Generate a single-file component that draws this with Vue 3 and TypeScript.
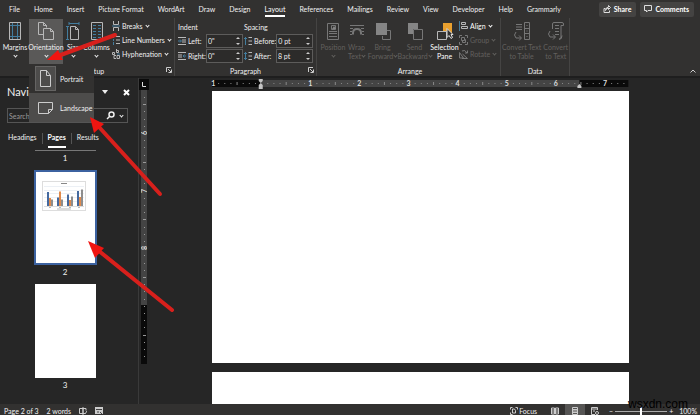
<script setup lang="ts">
import { ref } from 'vue'

const tabs = ['File', 'Home', 'Insert', 'Picture Format', 'WordArt', 'Draw', 'Design', 'Layout', 'References', 'Mailings', 'Review', 'View', 'Developer', 'Help', 'Grammarly']
const activeTab = ref('Layout')
const navTabs = ['Headings', 'Pages', 'Results']
const activeNav = ref('Pages')
const zoom = ref(50)
const search = ref('')

const left = ref('0"')
const right = ref('0"')
const before = ref('0 pt')
const after = ref('8 pt')

// Horizontal ruler: 8.5 inches shown, zero mark one inch in
const inch = 100 / 8.48
const hLabels = [
  { t: '1', at: 0.3 },
  ...[1, 2, 3, 4, 5, 6, 7].map((n) => ({ t: String(n), at: (n + 1) * inch })),
]
const hTicks = Array.from({ length: 67 }, (_, i) => i + 1)
  .filter((i) => i % 8 !== 0)
  .map((i) => ({ at: (i * inch) / 8, half: i % 8 === 4 }))

// Vertical ruler in pixels from its top
const vLabels = [{ t: '6', y: 43 }, { t: '7', y: 101 }, { t: '8', y: 158 }]
const vTicks = Array.from({ length: 37 }, (_, i) => ({ y: 7 + i * 7.2, n: i }))
  .filter((k) => k.n % 8 !== 5 || k.n > 24)
  .map((k) => ({ y: Math.round(k.y), half: k.n % 8 === 1 || k.n === 33 }))

const bars = [
  [28, 16, 13],
  [17, 29, 13],
  [23, 12, 19],
  [30, 18, 33],
]
const barColors = ['#44699f', '#e08a4c', '#8d8d8d']
</script>

<template>
  <div class="app">
    <header class="ribbon">
      <nav class="tabs">
        <button v-for="t in tabs" :key="t" class="tab" :class="{ active: t === activeTab }" @click="activeTab = t">{{ t }}</button>
        <span class="spacer"></span>
        <button class="pill">
          <svg width="8" height="8" viewBox="0 0 8 8"><path d="M2.500 3.500H1v4h5.500v-2M2.500 5.500Q3 3 5.500 3V4.500L7.500 2.500 5.500.500V2Q3 2 2.500 5.500" /></svg>
          Share
        </button>
        <button class="pill">
          <svg width="8" height="8" viewBox="0 0 8 8"><path d="M.500.500h7v5H4L2.500 7V5.500h-2z" /></svg>
          Comments
        </button>
      </nav>

      <div class="groups">
        <section class="group setup">
          <div class="content">
            <button class="big margins">
              <svg width="14" height="20" viewBox="0 0 14 20"><path class="w" d="M1.500 1.500h11v17h-11z" /><path class="b" d="M4.500 2v16M9.500 2v16M2 4.500h10M2 15.500h10" /></svg>
              <span>Margins</span><i class="chev"></i>
            </button>
            <button class="big orient">
              <svg width="18" height="20" viewBox="0 0 18 20"><path class="w" d="M6.500 13.500h-5v-12h5l3 3v2M6.500 1.500v3h3M6.500 7.500h7l3 3v8h-10zM13.500 7.500v3h3" /></svg>
              <span>Orientation</span><i class="chev"></i>
            </button>
            <button class="big size">
              <svg width="14" height="20" viewBox="0 0 14 20"><path class="w" d="M4.500 5.500h5l3 3v10h-8zM9.500 5.500v3h3" /><path class="b" d="M3 2.500h10M3 1v3M13 1v3M1.500 5v13M0 5.500h3M0 18.500h3" /></svg>
              <span>Size</span><i class="chev"></i>
            </button>
            <button class="big columns">
              <svg width="14" height="20" viewBox="0 0 14 20"><path class="w" d="M1.500 1.500h11v17h-11z" /><path class="b" d="M3 4.500h3M8 4.500h3M3 7.500h3M8 7.500h3M3 10.500h3M8 10.500h3M3 13.500h3M8 13.500h3M3 16.500h3M8 16.500h3" /></svg>
              <span>Columns</span><i class="chev"></i>
            </button>
            <div class="stack">
              <button class="small">
                <svg width="8" height="10" viewBox="0 0 8 10"><path class="w" d="M1.500 0v3.500h5V0M1.500 10V6.500h5V10" /><path class="b" d="M0 5h8" /></svg>
                Breaks<i class="chev"></i>
              </button>
              <button class="small">
                <svg width="8" height="10" viewBox="0 0 8 10"><path class="b" d="M1.500 0v3M1.500 4v2M1.500 7v3" /><path class="w" d="M4 1.500h4M4 5h4M4 8.500h4" /></svg>
                Line Numbers<i class="chev"></i>
              </button>
              <button class="small">
                <svg width="8" height="10" viewBox="0 0 8 10"><path class="w" d="M.500 3.500h2v2h-2zM4.500 0v3.500h2v-2h-2M4 6.500H2v3h2M5 6.500h2.500v3H5z" /><path class="b" d="M5 5h3" /></svg>
                Hyphenation<i class="chev"></i>
              </button>
            </div>
          </div>
          <footer>
            <span>Page Setup</span>
            <button class="launch" aria-label="Page Setup settings"><svg width="6" height="6" viewBox="0 0 6 6"><path d="M.500 5V.500H5M2 2l3 3M5.500 2.500v3h-3" /></svg></button>
          </footer>
        </section>

        <section class="group para">
          <div class="content fields">
            <div class="col">
              <h2>Indent</h2>
              <div class="field">
                <svg width="8" height="8" viewBox="0 0 8 8"><path class="w" d="M0 .500h8M4 3h4M4 5h4M0 7.500h8" /><path class="b" d="M0 4h3M2 2.500L3.500 4 2 5.500" /></svg>
                <label for="in-left">Left:</label>
                <span class="spin"><input id="in-left" v-model="left" type="text"><span class="arrows"><i class="up"></i><i class="down"></i></span></span>
              </div>
              <div class="field">
                <svg width="8" height="8" viewBox="0 0 8 8"><path class="w" d="M0 .500h8M0 3h4M0 5h4M0 7.500h8" /><path class="b" d="M5 4h3M6.500 2.500L5 4l1.500 1.500" /></svg>
                <label for="in-right">Right:</label>
                <span class="spin"><input id="in-right" v-model="right" type="text"><span class="arrows"><i class="up"></i><i class="down"></i></span></span>
              </div>
            </div>
            <div class="col wide">
              <h2>Spacing</h2>
              <div class="field">
                <svg width="8" height="8" viewBox="0 0 8 8"><path class="w" d="M4.500 .500H8M4.500 4H8M4.500 7.500H8" /><path class="b" d="M1.500 0v8M0 2L1.500.500 3 2" /></svg>
                <label for="sp-before">Before:</label>
                <span class="spin"><input id="sp-before" v-model="before" type="text"><span class="arrows"><i class="up"></i><i class="down"></i></span></span>
              </div>
              <div class="field">
                <svg width="8" height="8" viewBox="0 0 8 8"><path class="w" d="M4.500 .500H8M4.500 4H8M4.500 7.500H8" /><path class="b" d="M1.500 0v8M0 6l1.500 1.500L3 6M0 2L1.500.500 3 2" /></svg>
                <label for="sp-after">After:</label>
                <span class="spin"><input id="sp-after" v-model="after" type="text"><span class="arrows"><i class="up"></i><i class="down"></i></span></span>
              </div>
            </div>
          </div>
          <footer>
            <span>Paragraph</span>
            <button class="launch" aria-label="Paragraph settings"><svg width="6" height="6" viewBox="0 0 6 6"><path d="M.500 5V.500H5M2 2l3 3M5.500 2.500v3h-3" /></svg></button>
          </footer>
        </section>

        <section class="group arrange">
          <div class="content">
            <button class="big position" disabled>
              <svg width="14" height="20" viewBox="0 0 14 20"><path class="g" d="M1.500 2.500h11v16h-11zM3 12.500h8M3 15.500h8M3 10.500h8" /><path class="g" d="M5.500 4.500h4v4h-4z" /><path class="gf" d="M6 8l2-3 2 3z" /></svg>
              <span>Position</span><i class="chev"></i>
            </button>
            <button class="big wrap" disabled>
              <svg width="16" height="20" viewBox="0 0 16 20"><path class="g" d="M1 4.500h14M1 7.500h3M12 7.500h3M1 10.500h2M13 10.500h2M1 13.500h2M13 13.500h2" /><path class="g arc" d="M4 13.500V12Q4 8 8 8t4 4v1.500" /></svg>
              <span>Wrap<br>Text<i class="chev"></i></span>
            </button>
            <button class="big bring" disabled>
              <svg width="16" height="20" viewBox="0 0 16 20"><path class="g" d="M12 9.500h3.500v9h-8V15" /><path class="gf" d="M1 2h11v12H1z" /></svg>
              <span>Bring<br>Forward<i class="chev"></i></span>
            </button>
            <button class="big send" disabled>
              <svg width="16" height="20" viewBox="0 0 16 20"><path class="gf" d="M1 2h10v6H6v5H1z" /><path class="g" d="M6.500 8.500h9v10h-9z" /></svg>
              <span>Send<br>Backward<i class="chev"></i></span>
            </button>
            <button class="big pane">
              <svg width="18" height="20" viewBox="0 0 18 20"><path fill="#e9a02e" d="M7 2h9v11h-5V10H7z" /><path class="w" d="M1.500 10.500h9v8h-9z" /><path fill="#323130" stroke="#ddd" d="M11 7.500v9l2-2 2 3 1.500-1-1.500-3h2z" /></svg>
              <span>Selection<br>Pane</span>
            </button>
            <div class="stack">
              <button class="small bright">
                <svg width="9" height="10" viewBox="0 0 9 10"><path class="b" d="M.500 0v10" /><path class="w" d="M2.500 1.500h4v2h-4zM2.500 5.500h6v2h-6z" /></svg>
                Align<i class="chev"></i>
              </button>
              <button class="small" disabled>
                <svg width="9" height="10" viewBox="0 0 9 10"><path class="g" d="M.500 3V.500H3M6 .500h2.500V3M.500 7v2.500H3M6 9.500h2.500V7M2.500 2.500h3v3h-3zM3.500 5.500v2h3v-3h-1" /></svg>
                Group<i class="chev"></i>
              </button>
              <button class="small" disabled>
                <svg width="9" height="10" viewBox="0 0 9 10"><path class="g" d="M.500 9V3.500L4.500 9zM3 9.500h5.500L3.500 5M3 2q3-2 5 2M8.500 1.500V4H6" /></svg>
                Rotate<i class="chev"></i>
              </button>
            </div>
          </div>
          <footer><span>Arrange</span></footer>
        </section>

        <section class="group data">
          <div class="content">
            <button class="big" disabled>
              <svg width="18" height="20" viewBox="0 0 18 20"><path class="g" d="M11.500 1.500h5v17h-5zM11.500 7.500h5M11.500 12.500h5M13.500 4.500h1M13.500 10h1M13.500 15.500h1M3 3.500h6M3 6h6M3 8.500h6M3 11Q0 14 3 17h5M6 14.500L8.500 17 6 19.500" /></svg>
              <span>Convert Text<br>to Table</span>
            </button>
            <button class="big" disabled>
              <svg width="18" height="20" viewBox="0 0 18 20"><path class="g" d="M5.500 8V3q0-1.500 1.500-1.500h8q1.500 0 1.500 1.500v1.500H14V16q0 2-2 2M8 4.500h4M8 7.500h4M8 10.500h4M8 13.500h4M3 10q-3 3 0 6h5M6 13.500L8.500 16 6 18.500M12 18.500q3 0 3-4" /></svg>
              <span>Convert<br>to Text</span>
            </button>
          </div>
          <footer><span>Data</span></footer>
        </section>

        <button class="collapse" aria-label="Collapse the ribbon"><svg width="8" height="6" viewBox="0 0 8 6"><path d="M1.500 4.500L4 2l2.500 2.500" /></svg></button>
      </div>

      <div class="menu">
        <button class="item">
          <span class="ico on"><svg width="13" height="20" viewBox="0 0 13 20"><path d="M1.500 1.500h6l4 5v11h-10zM7.500 1.500v5h4" /></svg></span>Portrait
        </button>
        <button class="item hover">
          <span class="ico"><svg width="16" height="14" viewBox="0 0 16 14"><path d="M.500 1.500h14v7l-4 4H.500zM10.500 12.500v-4h4" /></svg></span>Landscape
        </button>
      </div>
    </header>

    <main>
      <aside class="nav">
        <div class="nav-head">
          <h1>Navigation</h1>
          <button aria-label="Pane options"><svg width="6" height="4" viewBox="0 0 6 4"><path fill="#eee" d="M0 0h6L3 4z" /></svg></button>
          <button aria-label="Close pane"><svg width="7" height="7" viewBox="0 0 7 7"><path class="x" d="M1 1l5 5M6 1L1 6" /></svg></button>
        </div>
        <div class="search">
          <input v-model="search" type="text" placeholder="Search" aria-label="Search document">
          <button aria-label="Search"><svg width="9" height="9" viewBox="0 0 9 9"><circle cx="5.500" cy="3.500" r="2.500" /><path d="M3.500 5.500L1 8" /></svg></button>
          <i class="chev"></i>
        </div>
        <div class="nav-tabs">
          <button v-for="t in navTabs" :key="t" :class="{ active: t === activeNav }" @click="activeNav = t"><span>{{ t }}</span></button>
        </div>
        <div class="thumbs">
          <div class="edge"></div>
          <span class="num">1</span>
          <div class="thumb current">
            <svg viewBox="0 0 44 30">
              <rect x=".5" y=".5" width="43" height="29" fill="#fff" stroke="#ddd" />
              <path d="M19 2.500h6" stroke="#888" />
              <path d="M2 5.500h40M2 9.500h40M2 12.500h40M2 16.500h40M2 20.500h40" stroke="#dfe5ee" stroke-width=".6" />
              <path d="M2 25.500h40" stroke="#bbb" stroke-width=".5" />
              <template v-for="(set, s) in bars" :key="s">
                <rect v-for="(h, b) in set" :key="b" :x="5 + s * 10 + b * 2" :y="25 - h / 2" width="2" :height="h / 2" :fill="barColors[b]" />
              </template>
              <path d="M15 28h14M7 26.500h2M17 26.500h2M27 26.500h2M36 26.500h2" stroke="#888" stroke-width=".6" />
            </svg>
          </div>
          <span class="num">2</span>
          <div class="thumb"></div>
          <span class="num">3</span>
        </div>
      </aside>

      <div class="vruler">
        <div class="corner"><svg width="6" height="6" viewBox="0 0 6 6"><path d="M1.500 0v4.500H5" /></svg></div>
        <svg class="vscale" width="6" height="275">
          <rect width="6" height="215" fill="#444" />
          <rect y="215" width="6" height="59" fill="#0a0a0a" />
          <rect v-for="k in vTicks" :key="k.y" :x="k.half ? 2 : 3" :y="k.y" :width="k.half ? 3 : 1" height="1" fill="#999" />
          <text v-for="l in vLabels" :key="l.t" :transform="`translate(6 ${l.y}) rotate(-90)`" text-anchor="middle">{{ l.t }}</text>
        </svg>
      </div>

      <div class="doc">
        <div class="sheets">
          <svg class="hruler" width="100%" height="12">
            <rect y="2" width="100%" height="7" fill="#444" />
            <rect y="2" width="11.7%" height="7" fill="#0a0a0a" />
            <rect x="88.200%" y="2" width="11.800%" height="7" fill="#0a0a0a" />
            <rect v-for="k in hTicks" :key="k.at" :x="k.at + '%'" :y="k.half ? 4 : 5" width="1" :height="k.half ? 3 : 1" fill="#888" />
            <text v-for="l in hLabels" :key="l.at" :x="l.at + '%'" y="8" text-anchor="middle">{{ l.t }}</text>
            <svg x="11.700%" overflow="visible"><path fill="#c4c4c4" d="M-2 1h4v2L0 5l-2-2zM0 5l2 2v4h-4V7z" /></svg>
            <svg x="88.200%" overflow="visible"><path fill="#c4c4c4" d="M0 6l2 2v2h-4V8z" /></svg>
          </svg>
          <div class="sheet"></div>
          <div class="sheet next"></div>
        </div>
      </div>
    </main>

    <footer class="status">
      <span>Page 2 of 3</span>
      <span>2 words</span>
      <svg width="8" height="8" viewBox="0 0 8 8"><path d="M4 1.500H.500v5H4zM4 1.500h3v2M4 6.500h1M5 6l1 1 2-3M4 0v8" /></svg>
      <svg class="macro" width="8" height="8" viewBox="0 0 8 8"><path fill="#ccc" stroke="none" d="M0 0h8v7H0z" /><path stroke="#444" d="M1 2.500h6M2 5h2M5 5l2 2" /></svg>
      <span class="spacer"></span>
      <button class="focus"><svg width="8" height="8" viewBox="0 0 8 8"><path d="M.500 2.500V.500h2M5.500.500h2v2M.500 5.500v2h2M2.500 2h2l1 1.500V6h-3z" /></svg>Focus</button>
      <div class="views">
        <button class="view" aria-label="Read Mode"><svg width="8" height="8" viewBox="0 0 8 8"><path d="M.500 1h3v6h-3zM4.500 1h3v6h-3zM1 3h2M5 3h2M1 5h2M5 5h2" /></svg></button>
        <button class="view on" aria-label="Print Layout"><svg width="8" height="8" viewBox="0 0 8 8"><path d="M1.500.500h5v7h-5zM2 2.500h4M2 4h4M2 5.500h4" /></svg></button>
        <button class="view" aria-label="Web Layout"><svg width="8" height="8" viewBox="0 0 8 8"><path d="M4 7.500H.500v-7h6V3M1 2h5M2 4h2" /><circle cx="6" cy="6" r="1.500" /></svg></button>
      </div>
      <div class="zoom">
        <span>−</span>
        <input v-model="zoom" type="range" min="0" max="100" aria-label="Zoom">
        <span>+</span>
        <output>100%</output>
      </div>
      <div class="mark">wsxdn.com</div>
    </footer>

    <svg class="arrows-over" width="700" height="415" viewBox="0 0 700 415">
      <g stroke="#d8201c" stroke-width="4" stroke-linecap="round">
        <path d="M115 35L58 56" />
        <path d="M160 194L99 127" />
        <path d="M172 310L99 251" />
      </g>
      <g fill="#f01511">
        <path d="M47 60L58 50 63 60z" />
        <path d="M90 117L104 124 94 133z" />
        <path d="M88 241L104 248 95 258z" />
      </g>
    </svg>
  </div>
</template>

<style>
body { background: #262626; }
</style>

<style scoped>
.app {
  position: relative;
  display: flex;
  flex-direction: column;
  height: 100vh;
  overflow: hidden;
  background: #262626;
  color: #f0f0f0;
  font: 7px/10px Lato, "Open Sans", sans-serif;
}
* { box-sizing: border-box; }
button, input { font: inherit; color: inherit; background: none; border: 0; padding: 0; margin: 0; }
button { white-space: nowrap; }
svg { display: block; flex: none; fill: none; }
h1, h2 { margin: 0; font-size: 7px; font-weight: 400; }
.spacer { flex: 1; }

.ribbon { position: relative; flex: none; background: #323130; border-bottom: 2px solid #1e1e1e; }
.tabs { display: flex; align-items: center; height: 18px; padding: 0 6px 0 9px; gap: 14px; }
.tab { height: 16px; border-bottom: 2px solid transparent; padding-top: 2px; }
.tab.active { border-bottom-color: #fff; color: #fff; }
.pill { display: flex; align-items: center; gap: 3px; height: 15px; padding: 0 5px 0 4px; background: #444342; border-radius: 2px; color: #fff; font-weight: 700; }
.pill + .pill { margin-left: -10px; }
.pill svg { stroke: #ddd; }

.groups { display: flex; height: 58px; }
.group { display: flex; flex-direction: column; flex: none; padding-top: 1px; border-right: 1px solid #454443; }
.content { display: flex; flex: 1; }
.group footer { display: flex; align-items: center; justify-content: center; height: 11px; position: relative; }
.launch { position: absolute; right: 2px; top: 2px; }
.launch svg { stroke: #ccc; }
.big { display: flex; flex-direction: column; align-items: center; height: 45px; padding-top: 2px; text-align: center; line-height: 9px; }
.big span { margin-top: 2px; }
.big > .chev { margin-top: 2px; }
.w { stroke: #b8b8b8; }
.b { stroke: #437d9e; }
.g { stroke: #777; }
.gf { fill: #858585; }
.arc { stroke-width: 2; }
button:disabled { color: #62605e; }
.chev { display: inline-block; width: 3px; height: 3px; border: solid currentColor; border-width: 0 1px 1px 0; transform: rotate(45deg); }
.stack { display: flex; flex-direction: column; gap: 4px; padding-top: 2px; }
.small { display: flex; align-items: center; gap: 2px; height: 10px; }
.small .chev, .wrap .chev, .bring .chev, .send .chev { margin: 0 0 2px 1px; }
.setup .stack { padding-left: 2px; }
.setup { width: 175px; }
.margins { width: 28px; padding-left: 2px; }
.orient { width: 34px; margin-left: 1px; background: #5a5958; }
.size { width: 20px; }
.columns { width: 27px; }
.para { width: 142px; }
.fields { padding-left: 3px; padding-right: 3px; gap: 1px; }
.col { width: 65px; display: flex; flex-direction: column; gap: 1px; }
.col.wide { width: 69px; }
.col h2 { height: 14px; padding-top: 3px; }
.field { display: flex; align-items: center; height: 14px; }
.field svg { margin-right: 2px; }
.field label { flex: 1; }
.spin { display: flex; width: 37px; height: 14px; border: 1px solid #5d5c5b; background: #2c2b2a; }
.spin input { flex: 1; min-width: 0; padding-left: 1px; }
.arrows { display: flex; flex-direction: column; justify-content: space-between; padding: 2px; }
.arrows i { border: 2px solid transparent; }
.arrows .up { border-bottom-color: #ccc; border-top: 0; }
.arrows .down { border-top-color: #ccc; border-bottom: 0; }
.arrange { width: 184px; padding-left: 3px; }
.position { width: 26px; }
.wrap { width: 21px; }
.bring { width: 31px; }
.send { width: 33px; }
.pane { width: 27px; color: #fff; }
.bright { color: #fff; }
.arrange .stack { padding-left: 1px; }
.data { width: 69px; }
.data .content { justify-content: space-between; padding: 0 1px; }
.data .big { min-width: 24px; }
.collapse { margin: auto 3px 2px auto; }
.collapse svg { stroke: #ccc; }

.menu { position: absolute; left: 29px; top: 64px; width: 65px; z-index: 2; background: #323130; }
.item { display: flex; align-items: center; gap: 4px; width: 100%; height: 29px; padding-left: 6px; }
.item.hover { background: #4d4c4b; }
.ico { display: flex; align-items: center; justify-content: center; width: 21px; height: 25px; }
.ico.on { background: #4d4c4b; border: 1px solid #656463; }
.ico svg { stroke: #ccc; }

main { display: flex; flex: 1; min-height: 0; }
.nav { width: 139px; flex: none; border-right: 1px solid #3a3a3a; }
.nav-head { display: flex; align-items: center; gap: 15px; height: 30px; padding: 0 8px 2px 7px; }
.nav-head h1 { flex: 1; font-size: 11px; line-height: 18px; }
.x { stroke: #fff; stroke-width: 2; }
.search { display: flex; align-items: center; gap: 5px; height: 15px; margin: 0 10px 0 7px; padding-right: 4px; border: 1px solid #555; }
.search input { flex: 1; min-width: 0; padding-left: 1px; }
.search input::placeholder { color: #9a9a9a; opacity: 1; }
.search svg { stroke: #eee; stroke-width: 1.500; }
.nav-tabs { display: flex; height: 27px; padding: 9px 0 0 8px; }
.nav-tabs button { display: flex; height: 18px; }
.nav-tabs button + button { margin-left: 5px; padding-left: 6px; background: linear-gradient(#555, #555) 0 1px / 1px 11px no-repeat; }
.nav-tabs span { height: 16px; border-bottom: 2px solid transparent; }
.nav-tabs .active { color: #fff; font-weight: 700; }
.nav-tabs .active span { border-bottom-color: #fff; }
.thumbs { display: flex; flex-direction: column; align-items: center; padding-right: 8px; }
.edge { width: 61px; height: 1px; background: #777; }
.num { height: 19px; padding-top: 2px; line-height: 11px; font-size: 8px; }
.thumb { width: 61px; height: 94px; background: #fff; }
.thumb.current { width: 63px; height: 95px; border: 2px solid #3c62a0; padding: 9px 6px; }
.thumb svg { width: 44px; height: 30px; }

.vruler { width: 11px; flex: none; padding-top: 1px; }
.corner { display: flex; align-items: center; justify-content: center; width: 10px; height: 11px; background: #0a0a0a; }
.corner svg { stroke: #ddd; }
.vscale { margin-left: 2px; }
.vruler text, .hruler text { fill: #ddd; font-size: 7px; font-weight: 700; }

.doc { flex: 1; display: flex; justify-content: center; padding-right: 9px; }
.sheets { width: 77%; display: flex; flex-direction: column; }
.hruler { margin-bottom: 1px; overflow: visible; }
.sheet { flex: none; height: 272px; background: #fff; }
.sheet.next { flex: 1; height: auto; min-height: 0; margin-top: 9px; }

.status { position: relative; display: flex; align-items: center; flex: none; height: 11px; padding: 3px 3px 0 4px; gap: 8px; background: #323130; white-space: nowrap; }
.status svg { stroke: #ccc; }
.focus { display: flex; align-items: center; gap: 1px; }
.views { display: flex; align-self: flex-end; }
.view { display: flex; align-items: center; justify-content: center; width: 20px; height: 11px; padding-top: 3px; }
.view.on { background: #565554; }
.zoom { display: flex; align-items: center; gap: 2px; margin-left: -4px; }
.zoom input { appearance: none; width: 52px; height: 8px; background: linear-gradient(#aaa, #aaa) center / 100% 1px no-repeat; }
.zoom input::-webkit-slider-thumb { appearance: none; width: 2px; height: 8px; background: #fff; }
.zoom output { margin-left: 4px; }
.mark { position: absolute; right: 12px; bottom: 4px; color: #000; font: 12px/14px "Liberation Sans", sans-serif; }

.arrows-over { position: absolute; left: 0; top: 0; z-index: 3; pointer-events: none; }
</style>
